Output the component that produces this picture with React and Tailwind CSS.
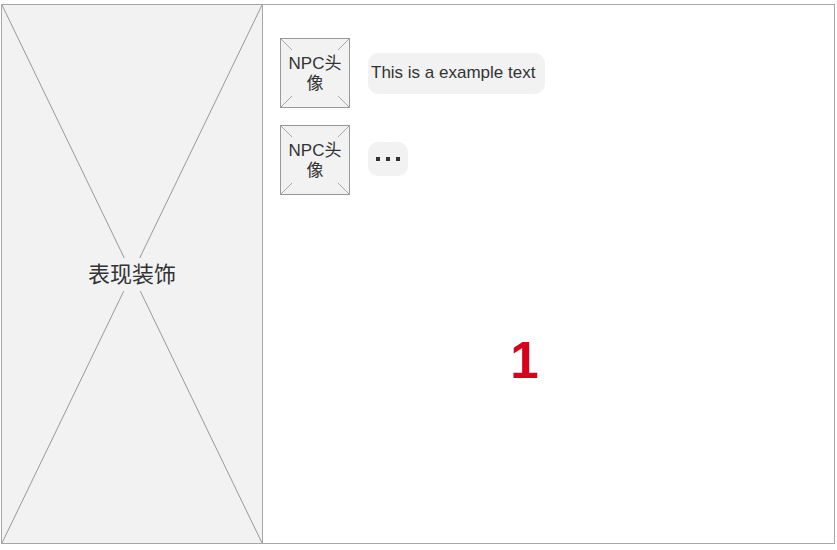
import React from 'react'

const font = { fontFamily: '"Liberation Sans", Arial, "Noto Sans CJK SC", sans-serif' }

const Avatar = () => (
  <div className="relative w-[70px] h-[70px] flex-shrink-0 border border-[#999] bg-[#f2f2f2] flex items-center justify-center px-1">
    <svg className="absolute inset-0" width="68" height="68" viewBox="0 0 68 68">
      <g stroke="#a6a6a6" strokeWidth="1">
        <line x1="0" y1="0" x2="11" y2="11" />
        <line x1="68" y1="0" x2="57" y2="11" />
        <line x1="0" y1="68" x2="11" y2="57" />
        <line x1="68" y1="68" x2="57" y2="57" />
      </g>
    </svg>
    <span className="relative text-[17px] leading-[20px] text-[#333] text-center mt-[2px]">NPC头像</span>
  </div>
)

const ChatRow = ({ children }) => (
  <div className="flex items-center gap-[18px]">
    <Avatar />
    {children}
  </div>
)

export default function App() {
  return (
    <div className="pt-[4px] pl-[1px] bg-white" style={font}>
      <div className="flex w-[834px] h-[540px] border border-[#a6a6a6]">
        {/* Decoration placeholder */}
        <div className="relative w-[261px] h-full flex-shrink-0 border-r border-[#a6a6a6] bg-[#f2f2f2] flex items-center justify-center">
          <svg className="absolute inset-0" width="260" height="538" viewBox="0 0 260 538" preserveAspectRatio="none">
            <g stroke="#999" strokeWidth="1">
              <line x1="0" y1="0" x2="260" y2="538" />
              <line x1="260" y1="0" x2="0" y2="538" />
            </g>
          </svg>
          <span className="relative text-[22px] text-[#333] px-1 bg-[#f2f2f2]">表现装饰</span>
        </div>

        {/* Dialogue area */}
        <div className="flex-1 flex flex-col pl-[17px] pt-[33px]">
          <div className="flex flex-col gap-[17px]">
            <ChatRow>
              <div className="w-[177px] h-[41px] rounded-[10px] bg-[#f2f2f2] flex items-center pl-[3px] text-[17px] text-[#333] whitespace-nowrap">
                This is a example text
              </div>
            </ChatRow>
            <ChatRow>
              <div className="w-[40px] h-[34px] rounded-[10px] bg-[#f2f2f2] flex items-center justify-center gap-[6px] -mt-[3px]">
                <span className="w-[4px] h-[4px] bg-[#333]" />
                <span className="w-[4px] h-[4px] bg-[#333]" />
                <span className="w-[4px] h-[4px] bg-[#333]" />
              </div>
            </ChatRow>
          </div>
          <div className="pl-[230px] mt-[140px]">
            <div className="w-[29px] text-center text-[51px] leading-none font-bold text-[#d9001b]">1</div>
          </div>
        </div>
      </div>
    </div>
  )
}
